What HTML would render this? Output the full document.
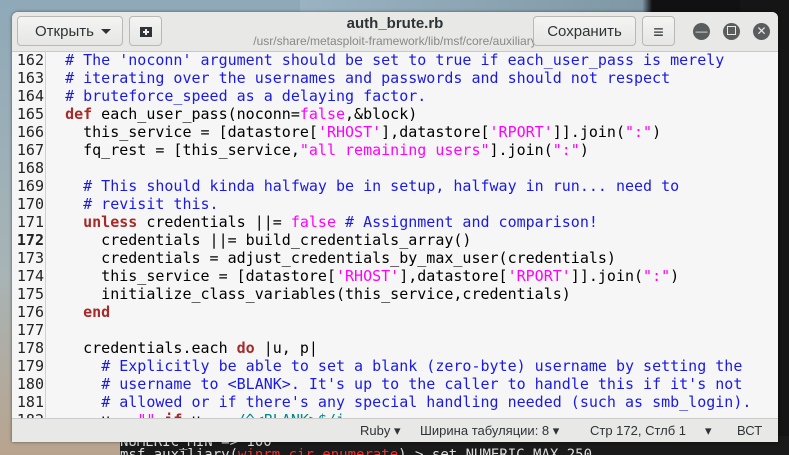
<!DOCTYPE html><html style="overflow:hidden"><head><meta charset="utf-8"><style>
html,body{margin:0;width:789px;height:455px;overflow:hidden}
body{position:relative;background:#1a1a1a;font-family:"Liberation Sans","DejaVu Sans",sans-serif}
.bgl{position:absolute;left:0;top:0;width:400px;height:455px;background:linear-gradient(180deg,#8fa9b8,#a8b4b6 60%,#b8a48e)}
.bgt{position:absolute;left:300px;top:0;width:489px;height:12px;background:linear-gradient(90deg,#9ab3c2,#7f98a6 70%,#111 72%)}
.term{position:absolute;left:740px;top:0;width:49px;height:455px;background:#151515}
.bot{position:absolute;left:120px;top:436px;width:669px;height:19px;overflow:hidden;background:#1a1a1a;color:#ddd;font:14px "DejaVu Sans Mono",monospace;white-space:pre;line-height:13px}
.win{position:absolute;left:12px;top:12px;width:766px;height:430px;background:#f6f6f6;border-radius:6px 6px 0 0;overflow:hidden;box-shadow:0 0 3px rgba(0,0,0,.5)}
.hdr{position:absolute;left:0;top:0;width:766px;height:39px;background:#e8e8e7;border-bottom:1px solid #c8c8c6}
.btn{position:absolute;top:4px;height:30px;border:1px solid #b8b8b5;border-radius:4px;background:linear-gradient(#f4f4f3,#e6e6e4);font-size:15px;color:#2e3436;line-height:30px;text-align:center;box-sizing:border-box}
.title{position:absolute;left:200px;width:366px;text-align:center}
.code{position:absolute;left:0;top:39px;width:766px;height:367px;font:15px/18px "DejaVu Sans Mono",monospace;white-space:pre;color:#000}
.gut{position:absolute;left:0;top:0;width:32px;text-align:right;color:#222}
.sep{position:absolute;left:33px;top:0;width:1px;height:367px;background:#d0d0d0}
.txt{position:absolute;left:35px;top:0}
.c{color:#1a1ae6}.k{color:#a52a2a;font-weight:bold}.s{color:#ff00ff}.r{color:#008b8b}
.st{position:absolute;left:0;top:406px;width:766px;height:24px;background:#e8e8e7;border-top:1px solid #ccc;font-size:13px;color:#2e3436;line-height:24px}
.st span{position:absolute;top:0}
.circ{position:absolute;top:11px;width:17px;height:17px;border-radius:50%;background:#5a5d5e;color:#e8e8e7;text-align:center;font-size:12px;line-height:17px}
</style></head><body>
<div class="bgl"></div><div class="bgt"></div><div class="term"></div>
<div class="bot">NUMERIC_MIN => 100
msf auxiliary(<span style="color:#e33">winrm_cir_enumerate</span>) > set NUMERIC_MAX 250</div>
<div class="win">
<div class="hdr">
<div class="btn" style="left:5px;width:106px;text-align:left;padding-left:17px">Открыть <span style="position:absolute;left:83px;top:12px;width:0;height:0;border-left:5px solid transparent;border-right:5px solid transparent;border-top:5px solid #2e3436"></span></div>
<div class="btn" style="left:117px;width:33px"><svg width="14" height="12" viewBox="0 0 14 12" style="margin-top:9px"><path d="M1 1h12v10h-12z" fill="#2e3436"/><path d="M7 3v6M4 6h6" stroke="#f0f0f0" stroke-width="2"/></svg></div>
<div class="title" style="top:3px;font-size:15px;font-weight:bold;color:#2e3436">auth_brute.rb</div>
<div class="title" style="top:22px;font-size:12px;color:#888">/usr/share/metasploit-framework/lib/msf/core/auxiliary</div>
<div class="btn" style="left:521px;width:103px">Сохранить</div>
<div class="btn" style="left:630px;width:33px;font-size:18px;font-weight:bold">≡</div>
<div class="circ" style="left:681px">—</div>
<div class="circ" style="left:711px"><span style="display:inline-block;width:7px;height:7px;border:1.5px solid #e8e8e7;margin-top:3px"></span></div>
<div class="circ" style="left:741px">✕</div>
</div>
<div class="code">
<div class="gut">162
163
164
165
166
167
168
169
170
171
<b>172</b>
173
174
175
176
177
178
179
180
181
182</div>
<div class="sep"></div>
<div class="txt">  <span class="c"># The 'noconn' argument should be set to true if each_user_pass is merely</span>
  <span class="c"># iterating over the usernames and passwords and should not respect</span>
  <span class="c"># bruteforce_speed as a delaying factor.</span>
  <span class="k">def</span> each_user_pass(noconn=<span class="s">false</span>,&amp;block)
    this_service = [datastore[<span class="s">'RHOST'</span>],datastore[<span class="s">'RPORT'</span>]].join(<span class="s">":"</span>)
    fq_rest = [this_service,<span class="s">"all remaining users"</span>].join(<span class="s">":"</span>)

    <span class="c"># This should kinda halfway be in setup, halfway in run... need to</span>
    <span class="c"># revisit this.</span>
    <span class="k">unless</span> credentials ||= <span class="s">false</span> <span class="c"># Assignment and comparison!</span>
      credentials ||= build_credentials_array()
      credentials = adjust_credentials_by_max_user(credentials)
      this_service = [datastore[<span class="s">'RHOST'</span>],datastore[<span class="s">'RPORT'</span>]].join(<span class="s">":"</span>)
      initialize_class_variables(this_service,credentials)
    <span class="k">end</span>

    credentials.each <span class="k">do</span> |u, p|
      <span class="c"># Explicitly be able to set a blank (zero-byte) username by setting the</span>
      <span class="c"># username to &lt;BLANK&gt;. It's up to the caller to handle this if it's not</span>
      <span class="c"># allowed or if there's any special handling needed (such as smb_login).</span>
      u = <span class="s">""</span> <span class="k">if</span> u =~ <span class="r">/^&lt;BLANK&gt;$/i</span></div>
</div>
<div class="st">
<span style="left:348px">Ruby ▾</span>
<span style="left:408px">Ширина табуляции: 8 ▾</span>
<span style="left:578px">Стр 172, Стлб 1</span>
<span style="left:693px">▾</span>
<span style="left:725px">ВСТ</span>
</div>
</div>
</body></html>
